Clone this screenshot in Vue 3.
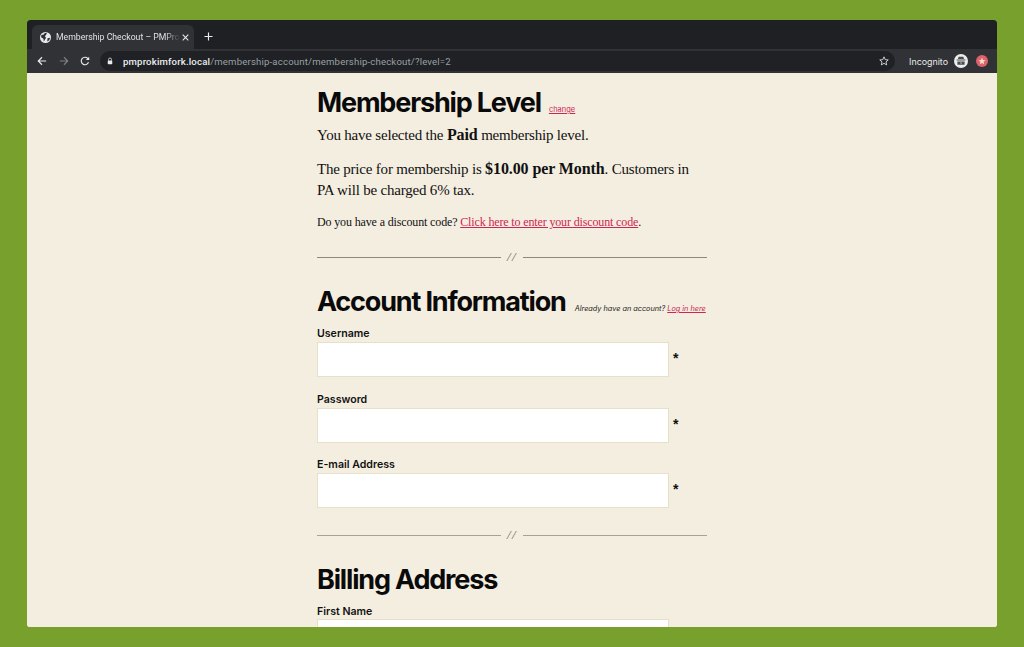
<script setup>
const fields = [
  { label: 'Username' },
  { label: 'Password' },
  { label: 'E-mail Address' },
]
</script>

<template>
  <div class="desk">
    <div class="window">
      <div class="tabstrip">
        <div class="tab">
          <svg class="globe" viewBox="0 0 16 16"><circle cx="8" cy="8" r="8" fill="#e8eaed"/><path d="M2 4.5 L5.5 3.5 L7 1.5 L10 1.2 L9 4 L7 6 L8.8 8.5 L7.2 11 L5.5 14 L5 9.8 L1.6 7.5 Z M11 9 L14.6 8.5 L13.5 12 L10.5 13.8 Z" fill="#2d2f33"/></svg>
          <span class="tabtitle">Membership Checkout – PMPro</span>
          <svg class="tabx" viewBox="0 0 10 10"><path d="M1 1 L9 9 M9 1 L1 9" stroke="#e8eaed" stroke-width="1.5"/></svg>
        </div>
        <svg class="plus" viewBox="0 0 10 10"><path d="M5 0.5 V9.5 M0.5 5 H9.5" stroke="#e8eaed" stroke-width="1.3"/></svg>
      </div>
      <div class="toolbar">
        <svg class="nav" viewBox="0 0 12 12"><path d="M11 6 H1.5 M6 1.5 L1.5 6 L6 10.5" fill="none" stroke="#e8eaed" stroke-width="1.4"/></svg>
        <svg class="nav" viewBox="0 0 12 12"><path d="M1 6 H10.5 M6 1.5 L10.5 6 L6 10.5" fill="none" stroke="#7d8083" stroke-width="1.4"/></svg>
        <svg class="nav" viewBox="0 0 12 12"><path d="M10.2 7.6 A4.5 4.5 0 1 1 9.3 2.9 L10.8 4.3" fill="none" stroke="#e8eaed" stroke-width="1.4"/><path d="M11 0.8 V4.8 H7 Z" fill="#e8eaed"/></svg>
        <div class="omnibox">
          <svg class="lock" viewBox="0 0 8 10"><path d="M2 4.5 V3 A2 2 0 0 1 6 3 V4.5" fill="none" stroke="#e8eaed" stroke-width="1"/><rect x="1" y="4.2" width="6" height="5" rx="0.8" fill="#e8eaed"/></svg>
          <span class="url"><span class="host">pmprokimfork.local</span>/membership-account/membership-checkout/?level=2</span>
          <svg class="star" viewBox="0 0 12 12"><path d="M6 1 L7.5 4.4 L11.1 4.7 L8.4 7.1 L9.2 10.7 L6 8.8 L2.8 10.7 L3.6 7.1 L0.9 4.7 L4.5 4.4 Z" fill="none" stroke="#e8eaed" stroke-width="1"/></svg>
        </div>
        <span class="incognito">Incognito</span>
        <svg class="avatar" viewBox="0 0 14 14"><circle cx="7" cy="7" r="7" fill="#eceded"/><path d="M4.6 2.8 H9.4 L10 5 H4 Z" fill="#4a4c4f"/><path d="M2.6 6 H11.4" stroke="#4a4c4f" stroke-width="1"/><path d="M3.4 7.6 H10.6 V10.8 H3.4 Z" fill="#4a4c4f"/><path d="M6.2 9 H7.8" stroke="#eceded" stroke-width="0.8"/></svg>
        <svg class="ext" viewBox="0 0 12 12"><circle cx="6" cy="6" r="6" fill="#dd626c"/><path d="M6 2.5 L7 5 L9.5 5.2 L7.6 6.8 L8.2 9.3 L6 8 L3.8 9.3 L4.4 6.8 L2.5 5.2 L5 5 Z" fill="#f8dcc8"/></svg>
      </div>
      <main class="page">
        <div class="column">
          <div class="head first">
            <h2>Membership Level</h2>
            <a class="small-link">change</a>
          </div>
          <p class="lead">You have selected the <b>Paid</b> membership level.</p>
          <p class="lead second">The price for membership is <b>$10.00 per Month</b>. Customers in PA will be charged 6% tax.</p>
          <p class="discount">Do you have a discount code? <a class="link">Click here to enter your discount code</a>.</p>
          <div class="sep"><span></span><i>//</i><span></span></div>
          <div class="head section">
            <h2>Account Information</h2>
            <span class="already">Already have an account? <a class="link">Log in here</a></span>
          </div>
          <div v-for="f in fields" :key="f.label" class="field">
            <label>{{ f.label }}</label>
            <div class="inputrow"><div class="input"></div><span class="req">*</span></div>
          </div>
          <div class="sep lower"><span></span><i>//</i><span></span></div>
          <div class="head section"><h2>Billing Address</h2></div>
          <div class="field">
            <label>First Name</label>
            <div class="inputrow tight"><div class="input"></div></div>
          </div>
        </div>
      </main>
    </div>
  </div>
</template>

<style scoped>
.desk { width: 1024px; height: 647px; background: #78a02d; padding: 20px 27px; box-sizing: border-box; overflow: hidden; }
.window { height: 607px; display: flex; flex-direction: column; border-radius: 3px; overflow: hidden; background: #f4eee0; }
.tabstrip { height: 29px; background: #1f2023; display: flex; align-items: flex-end; padding-left: 5px; flex: none; }
.tab { width: 162px; height: 24px; background: #303236; border-radius: 6px 6px 0 0; display: flex; align-items: center; padding: 0 6px 0 8px; box-sizing: border-box; }
.globe { width: 11px; height: 11px; flex: none; }
.tabtitle { font: 8.7px Roboto, sans-serif; color: #dfe1e4; margin-left: 5px; width: 124px; white-space: nowrap; overflow: hidden; flex: none; -webkit-mask-image: linear-gradient(90deg, #000 88%, transparent); mask-image: linear-gradient(90deg, #000 88%, transparent); }
.tabx { width: 7px; height: 7px; margin-left: 2px; flex: none; }
.plus { width: 9px; height: 9px; margin: 0 0 8px 10px; }
.toolbar { height: 24px; background: #303236; display: flex; align-items: center; padding-left: 10px; flex: none; }
.nav { width: 10px; height: 10px; margin-right: 11.5px; flex: none; }
.omnibox { width: 795px; height: 20px; margin-left: -1.5px; background: #1f2124; border-radius: 10px; display: flex; align-items: center; box-sizing: border-box; padding: 0 6px 0 7px; flex: none; }
.lock { width: 6px; height: 8px; flex: none; }
.url { font: 9.6px Roboto, sans-serif; color: #9aa0a6; margin-left: 10px; letter-spacing: 0.17px; white-space: nowrap; flex: 1; }
.host { color: #eceef0; font-weight: 500; }
.star { width: 10px; height: 10px; flex: none; }
.incognito { font: 8.9px Inter, sans-serif; color: #e8eaed; margin-left: 14px; flex: none; }
.avatar { width: 14px; height: 14px; margin-left: 6px; flex: none; }
.ext { width: 12px; height: 12px; margin-left: 8px; flex: none; }
.page { flex: 1; overflow: hidden; background: #f4eee0; padding-left: 290px; }
.column { width: 390px; }
.head { display: flex; align-items: baseline; }
.head h2 { margin: 0; font: 700 27px/34px Inter, sans-serif; letter-spacing: -1.17px; color: #0a0a0a; white-space: nowrap; }
.first { padding-top: 13px; }
.small-link { font: 7.5px Inter, sans-serif; color: #cd2653; text-decoration: underline; margin-left: 8px; }
.lead { margin: 5px 0 0; font: 15px/21px "Liberation Serif", serif; color: #111; letter-spacing: -0.2px; }
.lead b { font-size: 16px; line-height: 1; letter-spacing: -0.1px; }
.second { margin-top: 13px; width: 380px; }
.discount { margin: 12px 0 0; font: 12px/19px "Liberation Serif", serif; color: #111; letter-spacing: -0.14px; white-space: nowrap; }
.link { color: #cd2653; text-decoration: underline; }
.sep { display: flex; align-items: center; gap: 6px; margin-top: 15px; height: 20px; }
.sep span { flex: 1; height: 1px; background: #8e8a76; }
.sep i { font: italic 13px "Liberation Serif", serif; color: #6d6a5e; width: 10px; text-align: center; letter-spacing: 1.5px; }
.section { margin-top: 18px; padding-bottom: 7px; }
.already { font: italic 7.3px Inter, sans-serif; color: #222; margin-left: 9px; white-space: nowrap; }
.field + .field { margin-top: 14.5px; }
.field label { display: block; font: 600 10.6px/15px Inter, sans-serif; color: #111; }
.inputrow { display: flex; align-items: center; margin-top: 1px; }
.tight { margin-top: 0; }
.input { width: 352px; height: 35px; box-sizing: border-box; background: #fff; border: 1px solid #e6e0c9; flex: none; }
.req { font: 700 14px "Liberation Sans", sans-serif; color: #111; margin: 0 0 3px 4px; }
.lower { margin-top: 17px; }
.lower span { background: #a8a290; }
</style>

<style>
html, body { margin: 0; }
</style>
